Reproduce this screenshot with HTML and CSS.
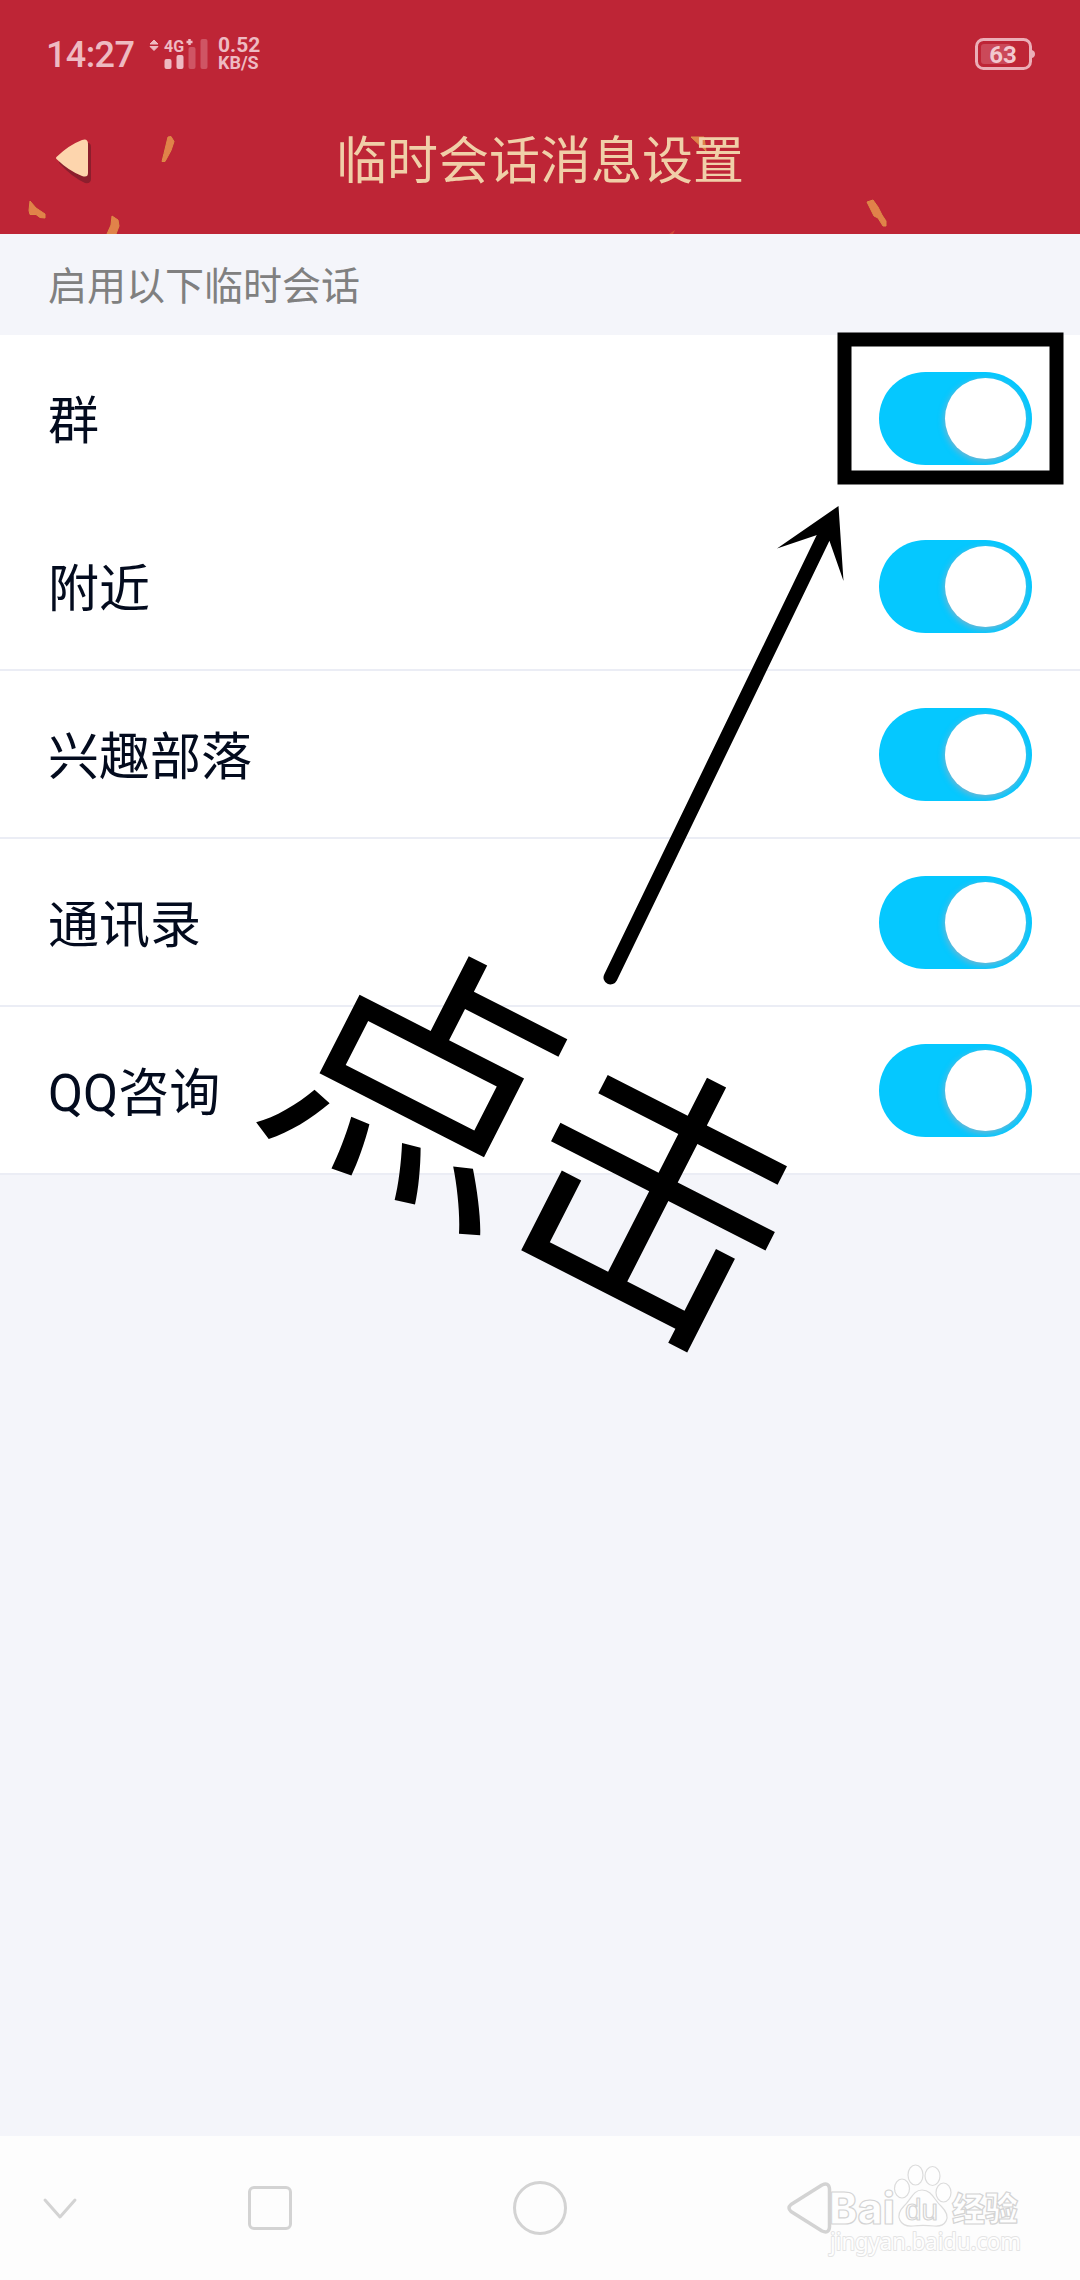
FILE: index.html
```html
<!DOCTYPE html>
<html lang="zh-CN">
<head>
<meta charset="utf-8">
<title>临时会话消息设置</title>
<link rel="stylesheet" href="styles.css">
</head>
<body>
<div class="screen">
  <header class="header">
    <svg class="confetti" viewBox="0 0 1080 234" aria-hidden="true">
      <g fill="#e1824a" stroke="#dc8c46" stroke-width="1" stroke-linejoin="round">
        <path d="M168 137l3-.5 3 5-3 9-6 11-3 0 2-8z"/>
        <path d="M30 201l6 7 9 6 0 4-5-.5-4-3-6 0-1-4z"/>
        <path d="M112 216l6 4 1 6-3 8h-9l4-9z"/>
        <path d="M691 137h13l2 14z"/>
        <path d="M867 202l6-2 5 7 4 8 4 6 0 5-3 0-5-8-4-2z"/>
      </g>
      <path d="M669 234l6-4-2 4z" fill="#d24a38"/>
    </svg>
    <div class="status">
      <span class="clock">14:27</span>
      <svg class="signal" viewBox="0 0 60 34" aria-hidden="true">
        <path d="M1 6l4-4 4 4zM1 8.500h8l-4 4z" fill="#eebac2" stroke="#eebac2" stroke-linejoin="round"/>
        <text class="signal-label" x="15" y="13.500">4G</text>
        <path d="M40.500 1v6M37.500 4h6" stroke="#eebac2" stroke-width="2.500"/>
        <rect x="15.500" y="21" width="7" height="10" rx="2" fill="#eebac2"/>
        <rect x="27.500" y="17" width="7" height="14" rx="2" fill="#eebac2"/>
        <rect x="39.500" y="9" width="7" height="22" rx="2" fill="#cf5564"/>
        <rect x="51.500" y="1" width="7" height="30" rx="2" fill="#cf5564"/>
      </svg>
      <span class="speed"><b>0.52</b><small>KB/S</small></span>
      <svg class="battery" viewBox="0 0 60 32" aria-hidden="true">
        <rect x="1.500" y="1.500" width="54" height="29" rx="7" fill="none" stroke="#ebaeb7" stroke-width="3"/>
        <path d="M57 12q3 1 3 4t-3 4z" fill="#ebaeb7"/>
        <rect x="6" y="6" width="30" height="20" rx="3" fill="#cb4959"/>
        <text class="battery-label" x="28" y="24.500" text-anchor="middle">63</text>
      </svg>
    </div>
    <div class="titlebar">
      <svg class="back" viewBox="0 0 44 50" aria-hidden="true">
        <path d="M5 22Q17 9 30 5q6-1 6 4v32q0 5-6 4Q17 39 5 26q-2-2 0-4z" fill="#841d2b" opacity=".85"/>
        <path d="M2 18.500Q14 7 27 2q6-2 6 4v29q0 5-6 3Q14 33 2 21.500q-2-1.500 0-3z" fill="#fdd5ad"/>
      </svg>
      <h1 class="title">临时会话消息设置</h1>
    </div>
  </header>
  <main class="content">
    <h2 class="section">启用以下临时会话</h2>
    <ul class="list">
      <li class="row row-plain"><span class="label">群</span><i class="switch"></i></li>
      <li class="row"><span class="label">附近</span><i class="switch"></i></li>
      <li class="row"><span class="label">兴趣部落</span><i class="switch"></i></li>
      <li class="row"><span class="label">通讯录</span><i class="switch"></i></li>
      <li class="row"><span class="label">QQ咨询</span><i class="switch"></i></li>
    </ul>
  </main>
  <nav class="navbar">
    <svg viewBox="0 0 1080 144" fill="none" stroke="#d3d3d3" stroke-width="3" stroke-linecap="round" stroke-linejoin="round" aria-hidden="true">
      <path d="M45 64l15 17 15-17"/>
      <rect x="249.500" y="51.500" width="41" height="41" rx="4.500"/>
      <circle cx="540" cy="72" r="25.500"/>
      <path stroke-width="3.500" d="M791 68.500L822 49q7-3 7.500 4v38q-.5 7-7.500 4L791 75.500q-4-3.500 0-7z"/>
      <g class="mark">
        <text class="mark-bai" x="829" y="88" textLength="66" lengthAdjust="spacingAndGlyphs">Bai</text>
        <g fill="#fefefe" stroke="#dcdcdc" stroke-width="1.200">
          <ellipse cx="902" cy="52.500" rx="7.500" ry="9.500"/>
          <ellipse cx="915.500" cy="39" rx="7.500" ry="10"/>
          <ellipse cx="932.500" cy="40" rx="7.500" ry="9.500"/>
          <ellipse cx="943.500" cy="56.500" rx="7.500" ry="9.500"/>
          <path d="M922 54c10 0 12 10 19 16 12 12 4 21-7 20-8-1-14-1-21 0-13 1-19-10-9-20 7-6 9-16 18-16z"/>
        </g>
        <text class="mark-du" x="905" y="84" textLength="33" lengthAdjust="spacingAndGlyphs">du</text>
        <text class="mark-cn" x="952" y="85">经验</text>
        <text class="mark-url" x="830" y="114" textLength="191" lengthAdjust="spacingAndGlyphs">jingyan.baidu.com</text>
      </g>
    </svg>
  </nav>
  <svg class="annotation" viewBox="0 0 1080 2280" aria-hidden="true">
    <rect x="844.500" y="339.500" width="212" height="138" fill="none" stroke="#000" stroke-width="14"/>
    <path d="M610.500 977.500L824 536" stroke="#000" stroke-width="14" stroke-linecap="round"/>
    <path d="M838.500 506L777 548.500 817 535 829.500 541 843.500 581z"/>
    <text class="callout" transform="translate(540.500 1134.500) rotate(27)" x="-270.500" y="105.500">点击</text>
  </svg>
</div>
</body>
</html>
```
FILE: styles.css
```css
* { box-sizing: border-box; }

body {
  margin: 0;
  font-family: Roboto, "Noto Sans CJK SC", sans-serif;
}

.screen {
  position: relative;
  display: flex;
  flex-direction: column;
  width: 1080px;
  height: 2280px;
  overflow: hidden;
  background: #f4f5fa;
}

.header {
  position: relative;
  height: 234px;
  background: #be2536;
}

.confetti {
  position: absolute;
  inset: 0;
  width: 1080px;
  height: 234px;
}

.status {
  position: relative;
  display: flex;
  align-items: flex-start;
  height: 88px;
  padding: 38px 45px 0 46px;
  color: #eebac2;
}

.clock {
  width: 103px;
  margin-top: -4px;
  font-size: 36px;
  font-weight: 500;
  line-height: 43px;
  letter-spacing: -.6px;
}

.signal {
  width: 60px;
  height: 34px;
}

.signal-label {
  font: 700 16px Roboto, sans-serif;
  fill: #eebac2;
}

.speed {
  display: flex;
  flex-direction: column;
  margin-left: 9px;
}

.speed b {
  margin-top: -2px;
  font-size: 21px;
  font-weight: 700;
  line-height: 19px;
}

.speed small {
  font-size: 18px;
  font-weight: 700;
  line-height: 16px;
}

.battery {
  width: 60px;
  height: 32px;
  margin-left: auto;
}

.battery-label {
  font: 700 24px Roboto, sans-serif;
  fill: #f2c8cf;
}

.titlebar {
  position: relative;
  display: grid;
  grid-template-columns: 200px 1fr 200px;
  align-items: center;
  height: 146px;
}

.back {
  width: 44px;
  height: 50px;
  margin: 4px 0 0 55px;
}

.title {
  margin: 0;
  padding-top: 2px;
  font-size: 51px;
  font-weight: 400;
  line-height: 76px;
  text-align: center;
  color: #f0cfa8;
}

.content { flex: 1; }

.section {
  height: 101px;
  margin: 0;
  padding-left: 48px;
  font-size: 39px;
  font-weight: 400;
  line-height: 106px;
  color: #808080;
}

.list {
  margin: 0;
  padding: 0;
  list-style: none;
}

.row {
  display: flex;
  align-items: center;
  justify-content: space-between;
  height: 168px;
  padding: 0 48px;
  border-bottom: 2px solid #ebedf5;
  background: #fff;
  font-size: 51px;
  line-height: 76px;
  color: #030b1e;
}

.row-plain { border-bottom-color: #fff; }

.label { padding-top: 7px; }

.switch {
  display: flex;
  align-items: center;
  justify-content: flex-end;
  width: 153px;
  height: 93px;
  padding-right: 6px;
  border-radius: 47px;
  background: #05c8ff;
  overflow: hidden;
}

.switch::before {
  content: "";
  width: 81px;
  height: 81px;
  border-radius: 50%;
  background: #fff;
  box-shadow: -1px 2px 6px rgba(150, 175, 195, .8);
}

.navbar {
  height: 144px;
  background: #fdfdfd;
}

.navbar svg {
  display: block;
  width: 1080px;
  height: 144px;
}

.mark text {
  fill: #fefefe;
  stroke: #d4d4d4;
  stroke-width: 1.2px;
}

.mark .mark-bai { font: 800 44px Inter, "Liberation Sans", sans-serif; }
.mark .mark-du { font: 400 29px "Liberation Sans", sans-serif; }
.mark .mark-cn { font: 900 33px "Noto Sans CJK SC", sans-serif; }

.mark .mark-url {
  font: 400 24px "Noto Sans", sans-serif;
  stroke: #e4e4e4;
  stroke-width: 2px;
  paint-order: stroke;
}

.annotation {
  position: absolute;
  inset: 0;
  width: 1080px;
  height: 2280px;
}

.callout {
  font: 400 276px "Noto Sans CJK SC", sans-serif;
  letter-spacing: -11px;
}
```
